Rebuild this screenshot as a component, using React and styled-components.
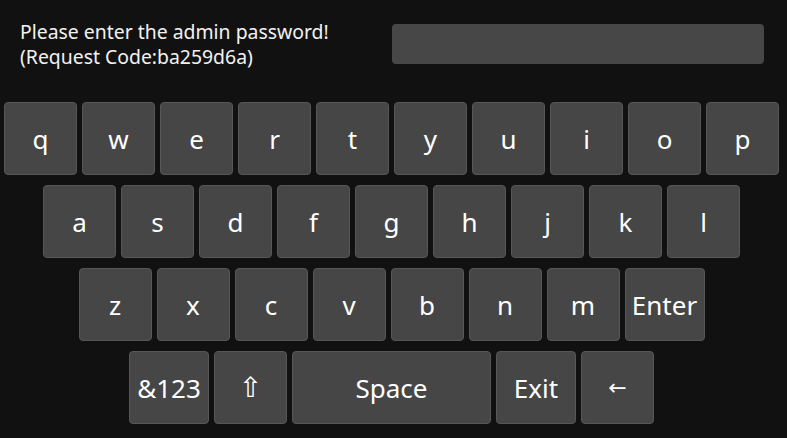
import React from 'react';
import styled, { createGlobalStyle } from 'styled-components';

const GlobalStyle = createGlobalStyle`
  body {
    margin: 0;
    background: #111111;
    font-family: 'Noto Sans', 'Open Sans', sans-serif;
  }
`;

const Screen = styled.div`
  width: 787px;
  height: 438px;
  background: #111111;
  overflow: hidden;
`;

const Header = styled.div`
  display: flex;
  align-items: flex-start;
  justify-content: space-between;
  padding: 19px 23px 0 20px;
  height: 83px;
  box-sizing: border-box;
`;

const Prompt = styled.div`
  color: #f2f2f2;
  font-size: 19.4px;
  line-height: 25px;
`;

const PasswordBox = styled.div`
  width: 372px;
  height: 40px;
  margin-top: 5px;
  background: #474747;
  border-radius: 4px;
`;

const Keyboard = styled.div`
  width: 783px;
  margin-top: 19px;
  display: flex;
  flex-direction: column;
  gap: 10px;
`;

const Row = styled.div`
  display: flex;
  justify-content: center;
  gap: 5px;
`;

const Key = styled.div`
  box-sizing: border-box;
  width: ${(p) => p.$w || 73}px;
  height: 73px;
  display: flex;
  align-items: center;
  justify-content: center;
  background: #464646;
  border: 1px solid #575757;
  border-radius: 4px;
  color: #ffffff;
  font-size: 26px;
`;

const Glyph = styled.span`
  font-family: 'DejaVu Sans', sans-serif;
  font-size: ${(p) => p.$size || 26}px;
`;

const rows = [
  ['q', 'w', 'e', 'r', 't', 'y', 'u', 'i', 'o', 'p'],
  ['a', 's', 'd', 'f', 'g', 'h', 'j', 'k', 'l'],
  ['z', 'x', 'c', 'v', 'b', 'n', 'm'],
];

function App() {
  return (
    <>
      <GlobalStyle />
      <Screen>
        <Header>
          <Prompt>
            Please enter the admin password!
            <br />
            (Request Code:ba259d6a)
          </Prompt>
          <PasswordBox />
        </Header>
        <Keyboard>
          {rows.map((row, i) => (
            <Row key={i}>
              {row.map((k) => (
                <Key key={k}>{k}</Key>
              ))}
              {i === 2 && <Key $w={80}>Enter</Key>}
            </Row>
          ))}
          <Row>
            <Key $w={80}>&amp;123</Key>
            <Key>
              <Glyph $size={28}>⇧</Glyph>
            </Key>
            <Key $w={199}>Space</Key>
            <Key $w={80}>Exit</Key>
            <Key>
              <Glyph $size={22}>←</Glyph>
            </Key>
          </Row>
        </Keyboard>
      </Screen>
    </>
  );
}

export default App;
